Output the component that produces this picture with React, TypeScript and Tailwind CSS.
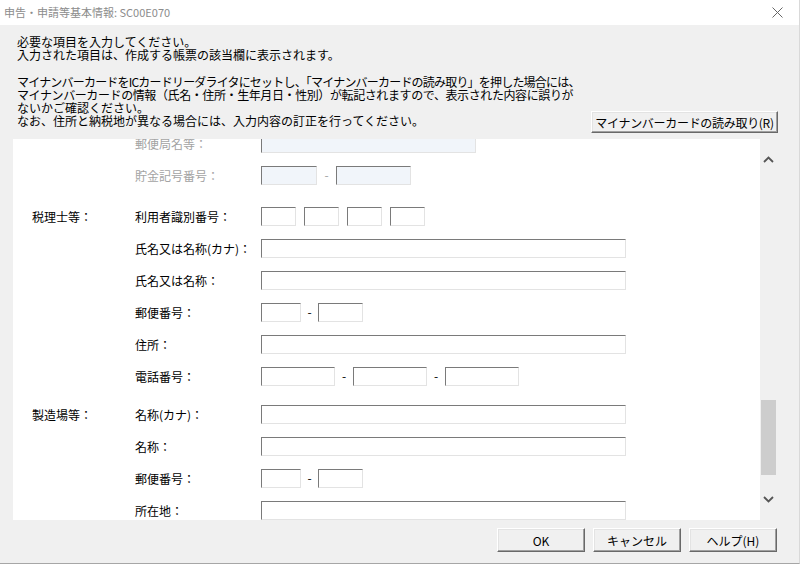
import React from "react";

type Field = { w: number } | { dash: number } | { gap: number };

function Box({ w, disabled }: { w: number; disabled?: boolean }) {
  return (
    <div
      className={
        "h-[19px] shrink-0 border border-t-[#7a7a7a] border-l-[#7a7a7a] border-r-[#e3e3e3] border-b-[#e3e3e3] " +
        (disabled ? "bg-[#f1f5fa]" : "bg-white")
      }
      style={{ width: w }}
    />
  );
}

function Row({
  l1,
  l2,
  fields,
  disabled,
  mt,
}: {
  l1?: string;
  l2: string;
  fields: Field[];
  disabled?: boolean;
  mt?: string;
}) {
  return (
    <div className={"flex items-center h-[32px] shrink-0 " + (mt ?? "")}>
      <div className="w-[103px] pl-[19px] box-content shrink-0 whitespace-nowrap text-black">{l1 ?? ""}</div>
      <div
        className={
          "w-[126px] shrink-0 whitespace-nowrap " + (disabled ? "text-[#a3a3a3]" : "text-black")
        }
      >
        {l2}
      </div>
      <div className="flex items-center">
        {fields.map((f, i) => {
          if ("w" in f) return <Box key={i} w={f.w} disabled={disabled} />;
          if ("dash" in f)
            return (
              <div
                key={i}
                className={"text-center leading-none " + (disabled ? "text-[#a3a3a3]" : "text-black")}
                style={{ width: f.dash }}
              >
                -
              </div>
            );
          return <div key={i} style={{ width: f.gap }} />;
        })}
      </div>
    </div>
  );
}

function WinButton({ children, className }: { children: React.ReactNode; className?: string }) {
  return (
    <div
      className={
        "flex items-center justify-center shrink-0 bg-[#f0f0f0] border border-t-white border-l-white border-r-[#696969] border-b-[#696969] shadow-[inset_-1px_-1px_0_#a0a0a0,inset_1px_1px_0_#e3e3e3] text-black whitespace-nowrap " +
        (className ?? "")
      }
    >
      {children}
    </div>
  );
}

export default function App() {
  const wide: Field[] = [{ w: 365 }];
  return (
    <div className="w-[800px] h-[564px] bg-[#f0f0f0] flex flex-col overflow-hidden text-[12px] leading-[13px] [font-family:'Noto_Sans_CJK_JP','Noto_Sans',sans-serif] border-b border-b-[#a6a6a6] border-r border-r-[#d9d9d9]">
      {/* Title bar */}
      <div className="h-[25px] shrink-0 bg-white flex items-center justify-between pl-[4px] pr-[16px]">
        <span className="text-[#8c8c8c] text-[11px]">申告・申請等基本情報: SC00E070</span>
        <svg width="11" height="11" viewBox="0 0 11 11">
          <path d="M0.5 0.5 L10.5 10.5 M10.5 0.5 L0.5 10.5" stroke="#666" strokeWidth="1" fill="none" />
        </svg>
      </div>

      {/* Header */}
      <div className="flex shrink-0 pl-[17px] pr-[21px] pt-[10px]">
        <div className="flex-1 min-w-0 text-black whitespace-nowrap pb-[6px]">
          <div>必要な項目を入力してください。</div>
          <div>入力された項目は、作成する帳票の該当欄に表示されます。</div>
          <div className="h-[14px]" />
          <div className="tracking-[-0.8px]">マイナンバーカードをICカードリーダライタにセットし、「マイナンバーカードの読み取り」を押した場合には、</div>
          <div className="tracking-[-0.4px]">マイナンバーカードの情報（氏名・住所・生年月日・性別）が転記されますので、表示された内容に誤りが</div>
          <div>ないかご確認ください。</div>
          <div>なお、住所と納税地が異なる場合には、入力内容の訂正を行ってください。</div>
        </div>
        <WinButton className="self-end w-[187px] h-[22px] tracking-[-0.3px]">マイナンバーカードの読み取り(R)</WinButton>
      </div>

      {/* Scroll panel */}
      <div className="flex shrink-0 h-[381px] ml-[13px] mr-[22px] mt-[6px]">
        <div className="flex-1 bg-white overflow-hidden flex flex-col">
          <div className="-mt-[12px] flex flex-col">
            <Row l2="郵便局名等：" disabled fields={[{ w: 215 }]} />
            <Row l2="貯金記号番号：" disabled fields={[{ w: 56 }, { dash: 19 }, { w: 75 }]} />
            <Row
              mt="mt-[9px]"
              l1="税理士等："
              l2="利用者識別番号："
              fields={[{ w: 35 }, { gap: 8 }, { w: 35 }, { gap: 8 }, { w: 35 }, { gap: 8 }, { w: 35 }]}
            />
            <Row l2="氏名又は名称(カナ)：" fields={wide} />
            <Row l2="氏名又は名称：" fields={wide} />
            <Row l2="郵便番号：" fields={[{ w: 40 }, { dash: 17 }, { w: 45 }]} />
            <Row l2="住所：" fields={wide} />
            <Row
              l2="電話番号："
              fields={[{ w: 74 }, { dash: 18 }, { w: 74 }, { dash: 18 }, { w: 74 }]}
            />
            <Row mt="mt-[6px]" l1="製造場等：" l2="名称(カナ)：" fields={wide} />
            <Row l2="名称：" fields={wide} />
            <Row l2="郵便番号：" fields={[{ w: 40 }, { dash: 17 }, { w: 45 }]} />
            <Row l2="所在地：" fields={wide} />
          </div>
        </div>
        {/* Scrollbar */}
        <div className="w-[17px] shrink-0 bg-[#f0f0f0] flex flex-col">
          <div className="h-[17px] mt-[12px] flex items-center justify-center">
            <svg width="11" height="7" viewBox="0 0 11 7">
              <path d="M1 6 L5.5 1.5 L10 6" stroke="#555" strokeWidth="1.8" fill="none" />
            </svg>
          </div>
          <div className="flex-1 flex flex-col">
            <div className="mt-[232px] h-[75px] w-[15px] mx-auto bg-[#cdcdcd]" />
          </div>
          <div className="h-[17px] mb-[12px] flex items-center justify-center">
            <svg width="11" height="7" viewBox="0 0 11 7">
              <path d="M1 1 L5.5 5.5 L10 1" stroke="#555" strokeWidth="1.8" fill="none" />
            </svg>
          </div>
        </div>
      </div>

      {/* Footer */}
      <div className="flex justify-end gap-[8px] pr-[22px] pt-[8px] shrink-0">
        <WinButton className="w-[88px] h-[24px]">OK</WinButton>
        <WinButton className="w-[88px] h-[24px]">キャンセル</WinButton>
        <WinButton className="w-[88px] h-[24px]">ヘルプ(H)</WinButton>
      </div>
    </div>
  );
}
